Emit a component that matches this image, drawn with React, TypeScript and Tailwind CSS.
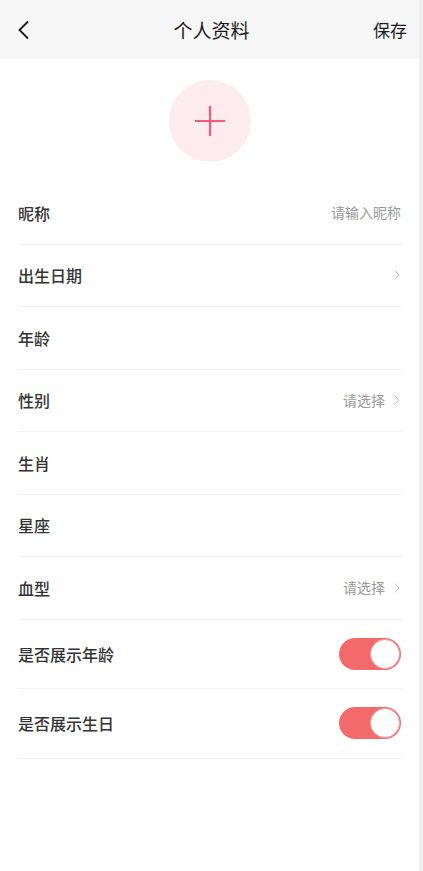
import { ChevronRight } from "lucide-react";

const font = { fontFamily: '"Noto Sans CJK SC", "Noto Sans", sans-serif' };

type Row = { label: string; value?: string; arrow?: boolean };

const rows: Row[] = [
   { label: "昵称", value: "请输入昵称" },
   { label: "出生日期", arrow: true },
   { label: "年龄" },
   { label: "性别", value: "请选择", arrow: true },
   { label: "生肖" },
   { label: "星座" },
   { label: "血型", value: "请选择", arrow: true },
];

function Toggle() {
   return (
      <div className="flex h-[32px] w-[62px] items-center justify-end rounded-full bg-[#f26a6c] p-[1px]">
         <div className="h-[30px] w-[30px] rounded-full border border-[#f3a0a0] bg-white" />
      </div>
   );
}

export default function App() {
   return (
      <div className="flex h-[871px] w-[423px] bg-white" style={font}>
         <div className="flex w-[419px] flex-col">
            <header className="grid h-[59px] grid-cols-[1fr_auto_1fr] items-center bg-[#f7f7f7] pl-[16px] pr-[12px]">
               <svg width="16" height="20" viewBox="0 0 16 20" fill="none">
                  <path d="M12 1.5 L3.5 10 L12 18.5" stroke="#1a1a1a" strokeWidth="1.8" />
               </svg>
               <h1 className="text-[19px] leading-none text-[#1a1a1a]">个人资料</h1>
               <button className="justify-self-end text-[17px] leading-none text-[#1a1a1a]">保存</button>
            </header>

            <div className="flex justify-center pt-[21px] pb-[20px]">
               <div className="flex h-[82px] w-[82px] items-center justify-center rounded-full bg-[#fdecef]">
                  <svg width="32" height="32" viewBox="0 0 32 32">
                     <path d="M16 1 V31 M1 16 H31" stroke="#ef5d7a" strokeWidth="2.2" />
                  </svg>
               </div>
            </div>

            <div className="px-[18px]">
               {rows.map((r) => (
                  <div
                     key={r.label}
                     className="flex h-[62.5px] items-center justify-between border-b border-[#f0f0f0]"
                  >
                     <span className="text-[16px] font-medium text-[#333]">{r.label}</span>
                     <div className="flex items-center gap-[4px] text-[14px] text-[#999]">
                        {r.value && <span>{r.value}</span>}
                        {r.arrow && <ChevronRight size={16} strokeWidth={1.2} className="-mr-[4px] text-[#b0b0b0]" />}
                     </div>
                  </div>
               ))}
               {["是否展示年龄", "是否展示生日"].map((l) => (
                  <div key={l} className="flex h-[69.5px] items-center justify-between border-b border-[#f0f0f0]">
                     <span className="text-[16px] font-medium text-[#333]">{l}</span>
                     <Toggle />
                  </div>
               ))}
            </div>
         </div>
         <div className="w-[4px] bg-[#efefef]" />
      </div>
   );
}
